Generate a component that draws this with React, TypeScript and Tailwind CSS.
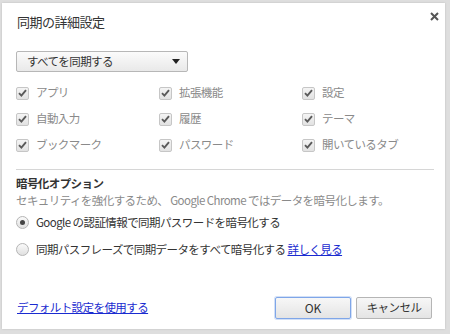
import { useState } from "react";

const font = { fontFamily: '"Noto Sans CJK JP", "Noto Sans", sans-serif' };

function CheckBox({ label }: { label: string }) {
  return (
    <div className="flex items-center h-[26px] gap-[7px]">
      <span className="flex items-center justify-center w-[13px] h-[13px] rounded-[2px] border border-[#c6c6c6] bg-gradient-to-b from-[#f4f4f4] to-[#e2e2e2]">
        <svg width="9" height="8" viewBox="0 0 9 8">
          <path d="M1 4.2 L3.4 6.6 L8 1.2" fill="none" stroke="#5a5a5a" strokeWidth="1.9" />
        </svg>
      </span>
      <span className="text-[11.5px] text-[#8a8a8a] tracking-[-0.05em]">{label}</span>
    </div>
  );
}

function Radio({ checked, children }: { checked?: boolean; children: React.ReactNode }) {
  return (
    <div className="flex items-center h-[27px] gap-[7px]">
      <span className="flex items-center justify-center w-[13px] h-[13px] rounded-full border border-[#b5b5b5] bg-gradient-to-b from-[#fafafa] to-[#e0e0e0]">
        {checked && <span className="w-[5px] h-[5px] rounded-full bg-[#444]" />}
      </span>
      <span className="text-[11.5px] text-[#333] tracking-[-0.05em]">{children}</span>
    </div>
  );
}

const items = [
  "アプリ", "拡張機能", "設定",
  "自動入力", "履歴", "テーマ",
  "ブックマーク", "パスワード", "開いているタブ",
];

export default function App() {
  const [sel] = useState("すべてを同期する");
  return (
    <div className="w-[450px] h-[334px] bg-[#dedede] pl-[2px] pt-[3px]" style={font}>
      <div className="relative flex flex-col w-[443px] h-[326px] bg-white shadow-[0_0_2px_rgba(0,0,0,0.15)]">
        <button className="absolute right-[6px] top-[8px] w-[10px] h-[10px] flex items-center justify-center">
          <svg width="9" height="9" viewBox="0 0 9 9">
            <path d="M1 1 L8 8 M8 1 L1 8" stroke="#555" strokeWidth="2" />
          </svg>
        </button>

        <div className="pl-[15px] pt-[10px] h-[28px] text-[13px] leading-[18px] text-[#333] tracking-[-0.04em]">
          同期の詳細設定
        </div>

        <div className="pl-[14px] mt-[20px]">
          <div className="flex items-center justify-between w-[172px] h-[21px] pl-[10px] pr-[7px] rounded-[2px] border border-[#b7b7b7] bg-gradient-to-b from-[#fbfbfb] to-[#e9e9e9] text-[11.5px] text-[#333] tracking-[-0.05em]">
            <span>{sel}</span>
            <svg width="8" height="5" viewBox="0 0 8 5">
              <path d="M0 0 H8 L4 5 Z" fill="#222" />
            </svg>
          </div>
        </div>

        <div className="pl-[14px] mt-[8px] grid grid-cols-[143px_143px_140px]">
          {items.map((t) => (
            <CheckBox key={t} label={t} />
          ))}
        </div>

        <div className="ml-[14px] mr-[11px] mt-[11px] h-px bg-[#d6d6d6]" />

        <div className="pl-[14px] mt-[5px]">
          <div className="h-[16px] leading-[16px] text-[11.5px] font-bold text-[#333] tracking-[-0.05em]">
            暗号化オプション
          </div>
          <div className="h-[16px] leading-[16px] mt-[1px] text-[11.5px] text-[#8a8a8a] tracking-[-0.05em]">
            セキュリティを強化するため、 Google Chrome ではデータを暗号化します。
          </div>
          <div className="mt-[1px]">
            <Radio checked>Google の認証情報で同期パスワードを暗号化する</Radio>
            <Radio>
              同期パスフレーズで同期データをすべて暗号化する{" "}
              <a className="text-[#1a2bd0] underline">詳しく見る</a>
            </Radio>
          </div>
        </div>

        <div className="mt-auto mb-[10px] flex items-center justify-between pl-[15px] pr-[13px]">
          <a className="text-[11.5px] text-[#1a2bd0] underline tracking-[-0.05em]">デフォルト設定を使用する</a>
          <div className="flex gap-[5px]">
            <button className="w-[76px] h-[22px] rounded-[2px] border border-[#7fa6e8] bg-gradient-to-b from-[#f7f7f7] to-[#e4e4e4] text-[12px] text-[#333] shadow-[0_0_0_1px_rgba(127,166,232,0.35)]">
              OK
            </button>
            <button className="w-[76px] h-[22px] rounded-[2px] border border-[#b5b5b5] bg-gradient-to-b from-[#f7f7f7] to-[#e4e4e4] text-[11.5px] text-[#333] tracking-[-0.05em]">
              キャンセル
            </button>
          </div>
        </div>
      </div>
    </div>
  );
}
